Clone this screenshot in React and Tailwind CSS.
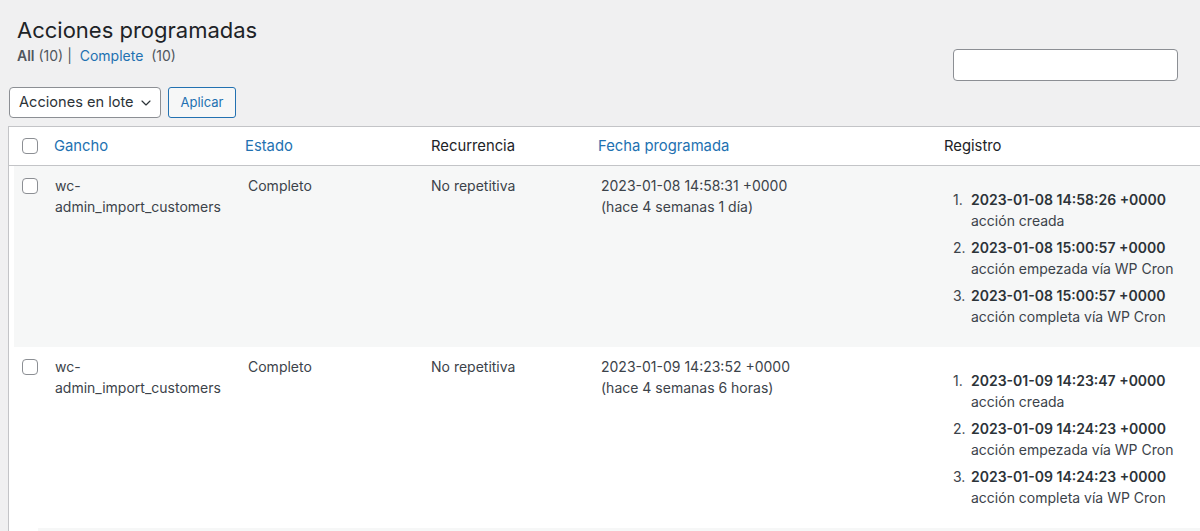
import { ChevronDown } from "lucide-react";

const rows = [
  {
    hook: "wc-admin_import_customers",
    status: "Completo",
    recurrence: "No repetitiva",
    date: "2023-01-08 14:58:31 +0000",
    ago: "(hace 4 semanas 1 día)",
    striped: true,
    log: [
      ["2023-01-08 14:58:26 +0000", "acción creada"],
      ["2023-01-08 15:00:57 +0000", "acción empezada vía WP Cron"],
      ["2023-01-08 15:00:57 +0000", "acción completa vía WP Cron"],
    ],
  },
  {
    hook: "wc-admin_import_customers",
    status: "Completo",
    recurrence: "No repetitiva",
    date: "2023-01-09 14:23:52 +0000",
    ago: "(hace 4 semanas 6 horas)",
    striped: false,
    log: [
      ["2023-01-09 14:23:47 +0000", "acción creada"],
      ["2023-01-09 14:24:23 +0000", "acción empezada vía WP Cron"],
      ["2023-01-09 14:24:23 +0000", "acción completa vía WP Cron"],
    ],
  },
];

const cols = "grid grid-cols-[36px_193px_183px_170px_343px_1fr]";

function Checkbox() {
  return <span className="block w-4 h-4 rounded-[4px] border border-[#8c8f94] bg-white" />;
}

function Row({ r }) {
  return (
    <div className={`${cols} border-l-[5px] border-l-white text-[14px] leading-[21px] text-[#3c434a] ${r.striped ? "bg-[#f6f7f7]" : "bg-white"}`}>
      <div className="pl-[8px] pt-[12px]">
        <Checkbox />
      </div>
      <div className="pl-[5px] pr-[10px] pt-[9px]">{r.hook}</div>
      <div className="pl-[5px] pt-[9px]">{r.status}</div>
      <div className="pl-[5px] pt-[9px]">{r.recurrence}</div>
      <div className="pl-[5px] pt-[9px]">
        <div>{r.date}</div>
        <div>{r.ago}</div>
      </div>
      <div className="pl-[14px] pt-[9px] pb-[14px]">
        <ol className="mt-[14px]">
          {r.log.map(([when, what], i) => (
            <li key={i} className="flex mb-[6px]">
              <span className="w-[18px] shrink-0">{i + 1}.</span>
              <div>
                <div className="font-semibold text-[#2c3338]">{when}</div>
                <div>{what}</div>
              </div>
            </li>
          ))}
        </ol>
      </div>
    </div>
  );
}

export default function App() {
  return (
    <div className="h-[531px] overflow-hidden bg-[#f0f0f1] font-['Inter',sans-serif] text-[#3c434a]">
      <div className="pl-[17px] pr-[22px] pt-[16px]">
        <h1 className="text-[22px] leading-[29px] text-[#1d2327] font-normal">Acciones programadas</h1>
        <div className="flex justify-between items-start mt-[1px]">
          <div className="text-[14px] leading-[20px] text-[#50575e] whitespace-pre">
            <span className="font-semibold">All</span> (10) <span className="text-[#50575e]">|</span>{"  "}
            <span className="text-[#2271b1]">Complete</span>{"  "}(10)
          </div>
          <div className="mt-[3px] w-[225px] h-[32px] rounded-[4px] border border-[#8c8f94] bg-white" />
        </div>
      </div>

      <div className="flex gap-[7px] pl-[9px] mt-[6px]">
        <div className="w-[152px] h-[31px] rounded-[4px] border border-[#8c8f94] bg-white flex items-center justify-between pl-[9px] pr-[6px] text-[14.6px] text-[#2c3338]">
          <span>Acciones en lote</span>
          <ChevronDown size={16} strokeWidth={1.75} className="text-[#2c3338]" />
        </div>
        <div className="w-[68px] h-[31px] rounded-[3px] border border-[#2271b1] bg-[#f6f7f7] flex items-center justify-center text-[13px] text-[#2271b1]">
          Aplicar
        </div>
      </div>

      <div className="ml-[8px] mt-[8px] w-[1220px] border border-[#c3c4c7] bg-white">
        <div className={`${cols} h-[39px] items-center border-b border-[#c3c4c7] text-[14.8px]`}>
          <div className="pl-[13px]">
            <Checkbox />
          </div>
          <div className="pl-[9px] text-[#2271b1]">Gancho</div>
          <div className="pl-[7px] text-[#2271b1]">Estado</div>
          <div className="pl-[10px] text-[#1d2327]">Recurrencia</div>
          <div className="pl-[7px] text-[#2271b1]">Fecha programada</div>
          <div className="pl-[10px] text-[#1d2327]">Registro</div>
        </div>
        {rows.map((r, i) => (
          <Row key={i} r={r} />
        ))}
        <div className="flex h-[40px]">
          <div className="w-[29px] bg-white" />
          <div className="flex-1 bg-[#f6f7f7]" />
        </div>
      </div>
    </div>
  );
}
